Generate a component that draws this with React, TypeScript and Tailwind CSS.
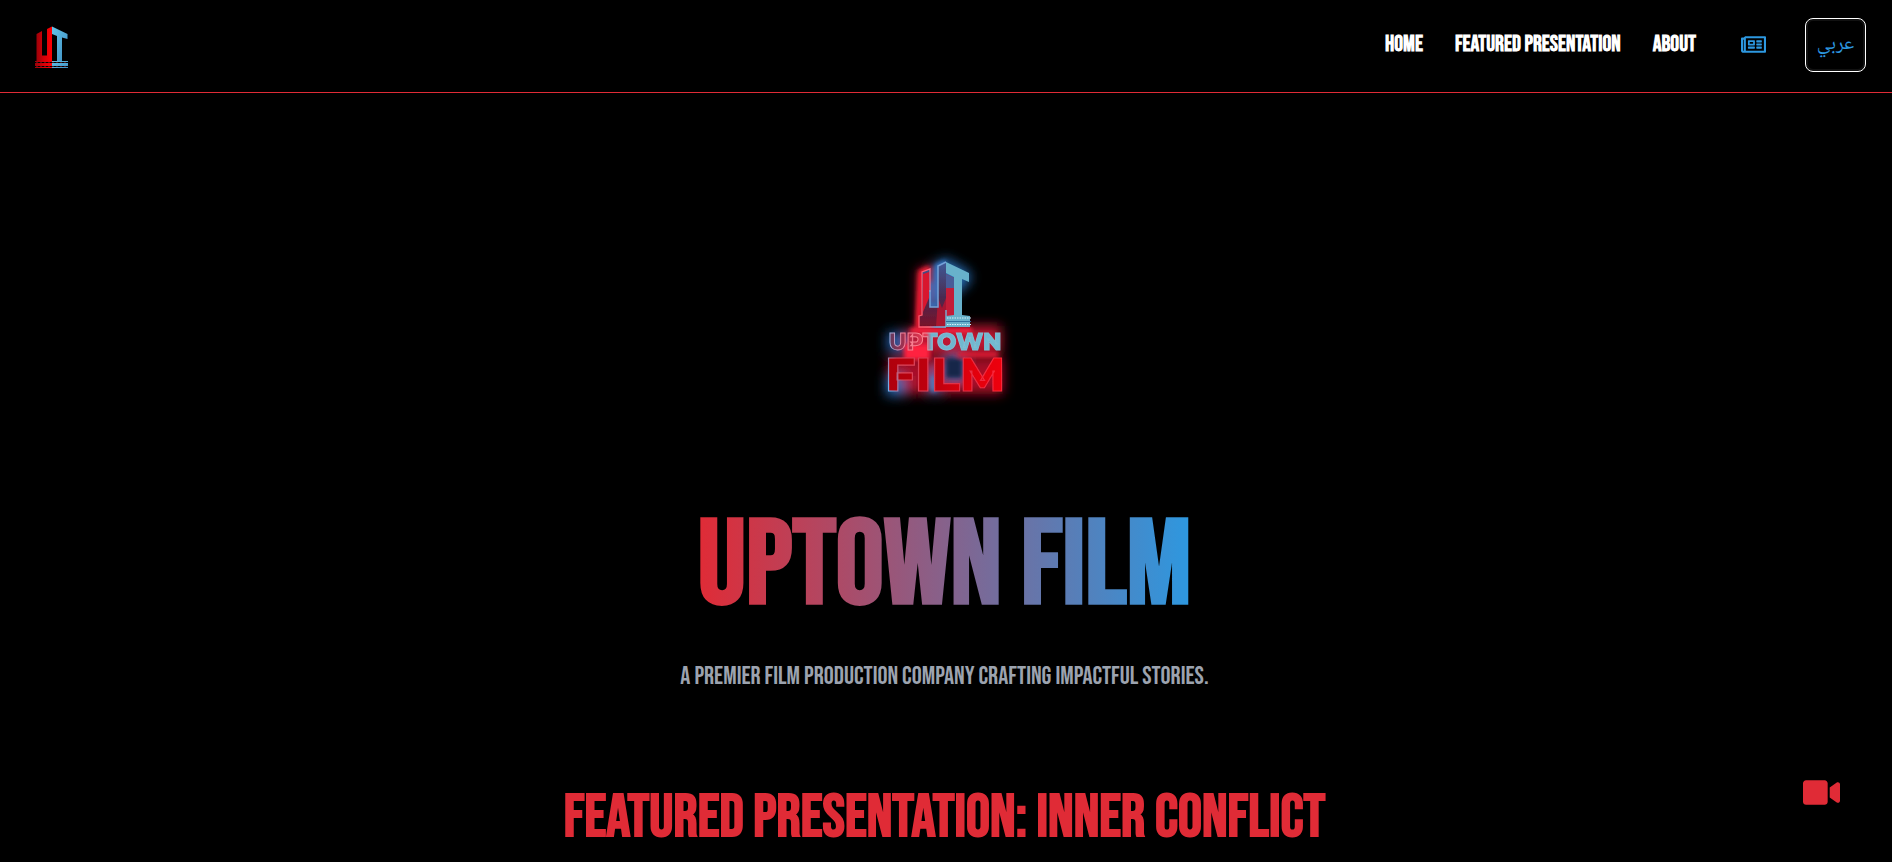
import { FaRegNewspaper, FaVideo } from "react-icons/fa";

function HeaderMark() {
  return (
    <svg viewBox="0 0 34 44" className="h-11 w-[34px]" aria-hidden="true">
      <defs>
        <linearGradient id="markRed" x1="0" x2="1" y1="0" y2="0">
          <stop offset="0" stopColor="#9c0008" />
          <stop offset="0.5" stopColor="#d60008" />
          <stop offset="1" stopColor="#ff0004" />
        </linearGradient>
        <linearGradient id="markBlue" x1="0" x2="1" y1="0" y2="1">
          <stop offset="0" stopColor="#62c3e6" />
          <stop offset="1" stopColor="#3f8fc4" />
        </linearGradient>
      </defs>
      <path d="M1.5 8 L7 5 V29.5 H12 V3 L17 0.5 V35 H1.5 Z" fill="url(#markRed)" />
      <path d="M17 0.5 L32.5 8 V13 L27 11.5 V35 H22 V10 L17 8 Z" fill="url(#markBlue)" />
      <path d="M0 35 H17 V36 H0 Z M0 37 H17 V40 H0 Z M0 41 H17 V42 H0 Z" fill="url(#markRed)" />
      <path d="M17 35 H33 V36 H17 Z M17 37 H33 V40 H17 Z M17 41 H33 V42 H17 Z" fill="url(#markBlue)" />
      <path d="M1 36.5 H32 M1 40.5 H32" stroke="#7b2026" strokeWidth="1" strokeDasharray="2 2" opacity="0.6" />
    </svg>
  );
}

function NeonLogo() {
  return (
    <svg viewBox="0 0 170 180" className="h-[180px] w-[170px]" role="img" aria-label="Uptown Film">
      <defs>
        <filter id="glow" x="-40%" y="-40%" width="180%" height="180%">
          <feGaussianBlur stdDeviation="6" />
        </filter>
        <filter id="halo" x="-40%" y="-40%" width="180%" height="180%">
          <feGaussianBlur stdDeviation="2.2" />
        </filter>
        <filter id="soft" x="-10%" y="-10%" width="120%" height="120%">
          <feGaussianBlur stdDeviation="0.6" />
        </filter>
        <linearGradient id="uFill" x1="0" x2="0" y1="0" y2="1">
          <stop offset="0" stopColor="#3f5a98" />
          <stop offset="0.55" stopColor="#4a2a50" />
          <stop offset="1" stopColor="#7a1028" />
        </linearGradient>
        <linearGradient id="uLine" gradientUnits="userSpaceOnUse" x1="60" x2="86" y1="0" y2="0">
          <stop offset="0" stopColor="#ff5a6e" />
          <stop offset="0.35" stopColor="#ff6a7e" />
          <stop offset="0.6" stopColor="#78a8dc" />
          <stop offset="1" stopColor="#6fbce4" />
        </linearGradient>
        <linearGradient id="wordLine" gradientUnits="userSpaceOnUse" x1="28" x2="142" y1="0" y2="0">
          <stop offset="0" stopColor="#8fb0e4" />
          <stop offset="0.14" stopColor="#f47c92" />
          <stop offset="0.32" stopColor="#ff8692" />
          <stop offset="0.4" stopColor="#84bfd6" />
          <stop offset="1" stopColor="#7bbbd0" />
        </linearGradient>
        <linearGradient id="wordFill" gradientUnits="userSpaceOnUse" x1="28" x2="142" y1="0" y2="0">
          <stop offset="0" stopColor="#5a3a60" />
          <stop offset="0.2" stopColor="#c02c48" />
          <stop offset="0.34" stopColor="#e8405a" />
          <stop offset="0.38" stopColor="#6db5ce" />
          <stop offset="1" stopColor="#72bad2" />
        </linearGradient>
        <linearGradient id="filmFill" gradientUnits="userSpaceOnUse" x1="30" x2="142" y1="0" y2="0">
          <stop offset="0" stopColor="#b00008" />
          <stop offset="0.45" stopColor="#c20010" />
          <stop offset="0.7" stopColor="#df000a" />
          <stop offset="1" stopColor="#ee0008" />
        </linearGradient>
        <linearGradient id="filmLine" gradientUnits="userSpaceOnUse" x1="30" x2="142" y1="151" y2="117">
          <stop offset="0" stopColor="#74b0ea" />
          <stop offset="0.14" stopColor="#d8485e" />
          <stop offset="0.6" stopColor="#e03048" />
          <stop offset="1" stopColor="#ff2438" />
        </linearGradient>
      </defs>

      <g filter="url(#glow)">
        <path d="M58 30 L70 26 L74 60 L66 86 H141 V112 H58 Z" fill="#c41430" />
        <path d="M74 24 L86 18 L110 32 V42 L90 60 H74 Z" fill="#286cb4" />
        <rect x="27" y="92" width="19" height="20" fill="#2458a0" />
        <rect x="46" y="90" width="94" height="24" fill="#c01530" />
        <rect x="29" y="118" width="114" height="36" fill="#a80c26" />
        <path d="M26 136 H44 V156 H26 Z M70 128 H79 V154 H70 Z M86 116 H104 V140 H86 Z" fill="#2a68b0" />
      </g>

      <g filter="url(#halo)">
        <path d="M58 87 L61 32 L70 28" fill="none" stroke="#ff1a36" strokeWidth="5" />
        <path d="M86 22 L77 26 V66 H70 V42" fill="none" stroke="#3572c0" strokeWidth="5" />
        <path d="M50 88 H112 V93 H50 Z M44 104 H70 V120 H44 Z" fill="#ff2440" />
        <path d="M98 112 H138 V117 H98 Z" fill="#e01c36" />
        <path d="M86 118 H102 V138 H86 Z" fill="#142848" />
        <path d="M71 136 H76 V152 H71 Z" fill="#4a80c0" />
      </g>

      <g filter="url(#soft)">
        <path d="M59 87 V76 L62 75 V32 L70 29 V67 H78 V26 L86 22 V87 Z" fill="url(#uFill)" />
        <path d="M86 34 L94 38 V76 H86 Z" fill="#c41c38" />
        <path d="M86 34 L94 38 V48 H86 Z" fill="#4a5c98" />
        <path d="M78 58 L82 68 L86 58 V87 H76 Z" fill="#b81430" opacity="0.8" />
        <path d="M63 34 L69 32 V58 L63 72 Z" fill="#d9152e" />
        <path
          d="M86 87 H59 V76 L62 75 V32 L70 29 V52 M86 70 V87"
          fill="none"
          stroke="url(#uLine)"
          strokeWidth="1.3"
        />
        <path d="M70 50 V67 H78 V26 L86 22" fill="none" stroke="#74a2d8" strokeWidth="1.5" />
        <path d="M86 22 L109 33 V42 L102 39 V75 L110 76 V87 H86 V76 L94 75 V37 L86 33 Z" fill="#67b1cb" />
        <path d="M87 78 H111 M87 84.5 H111" stroke="#d6f0f7" strokeWidth="1.2" strokeDasharray="1.5 1" />
        <path d="M86 81.5 H111" stroke="#2f6f9b" strokeWidth="1" />
        <text
          x="85"
          y="110"
          textAnchor="middle"
          className="font-[Montserrat,Inter,sans-serif] text-[23px] font-extrabold"
          fill="url(#wordFill)"
          stroke="url(#wordLine)"
          strokeWidth="1"
        >
          UPTOWN
        </text>
        <text
          x="85"
          y="151"
          textAnchor="middle"
          className="font-[Montserrat,Inter,sans-serif] text-[47px] font-extrabold"
          fill="url(#filmFill)"
          stroke="url(#filmLine)"
          strokeWidth="1.2"
        >
          FILM
        </text>
      </g>
    </svg>
  );
}

const links = [
  { label: "Home", href: "#home" },
  { label: "Featured Presentation", href: "#featured" },
  { label: "About", href: "#about" },
];

export default function App() {
  return (
    <div className="min-h-screen bg-black font-['Bebas_Neue',sans-serif] text-white">
      <header className="flex h-[93px] items-center justify-between border-b border-[#e02b36] pr-[26px] pb-[2px] pl-[35px]">
        <a href="#home" aria-label="Uptown Film home" className="pt-[6px]">
          <HeaderMark />
        </a>
        <nav className="flex items-center">
          <ul className="flex gap-8 pb-[2px] text-[22px] font-bold">
            {links.map((link) => (
              <li key={link.href}>
                <a href={link.href}>{link.label}</a>
              </li>
            ))}
          </ul>
          <a href="#news" aria-label="News" className="ml-[45px] pb-[2px] text-[#2d98e0]">
            <FaRegNewspaper className="size-[25px]" />
          </a>
          <button
            type="button"
            lang="ar"
            className="ml-[39px] h-[54px] w-[61px] rounded-lg border border-white font-['Noto_Naskh_Arabic',serif] text-xl text-[#2d98e0] inset-shadow-[0_0_0_2px_#111111]"
          >
            عربي
          </button>
        </nav>
      </header>

      <main className="flex flex-col items-center pt-[147px] pr-[3px] text-center">
        <NeonLogo />
        <h1 className="mt-[83px] bg-linear-to-r/srgb from-[#e02b36] to-[#2d98e0] bg-clip-text text-[120px] leading-[128px] font-bold text-transparent">
          Uptown Film
        </h1>
        <p className="mt-7 text-[25px] leading-9 text-[#9ca3af]">
          A premier film production company crafting impactful stories.
        </p>
        <section id="featured" className="mt-[91px]">
          <h2 className="text-[60px] leading-[64px] font-bold text-[#e02b36]">Featured Presentation: Inner Conflict</h2>
        </section>
      </main>

      <button type="button" aria-label="Watch video" className="fixed right-[52px] bottom-[51px] text-[#e02b36]">
        <FaVideo className="size-[37px]" />
      </button>
    </div>
  );
}
